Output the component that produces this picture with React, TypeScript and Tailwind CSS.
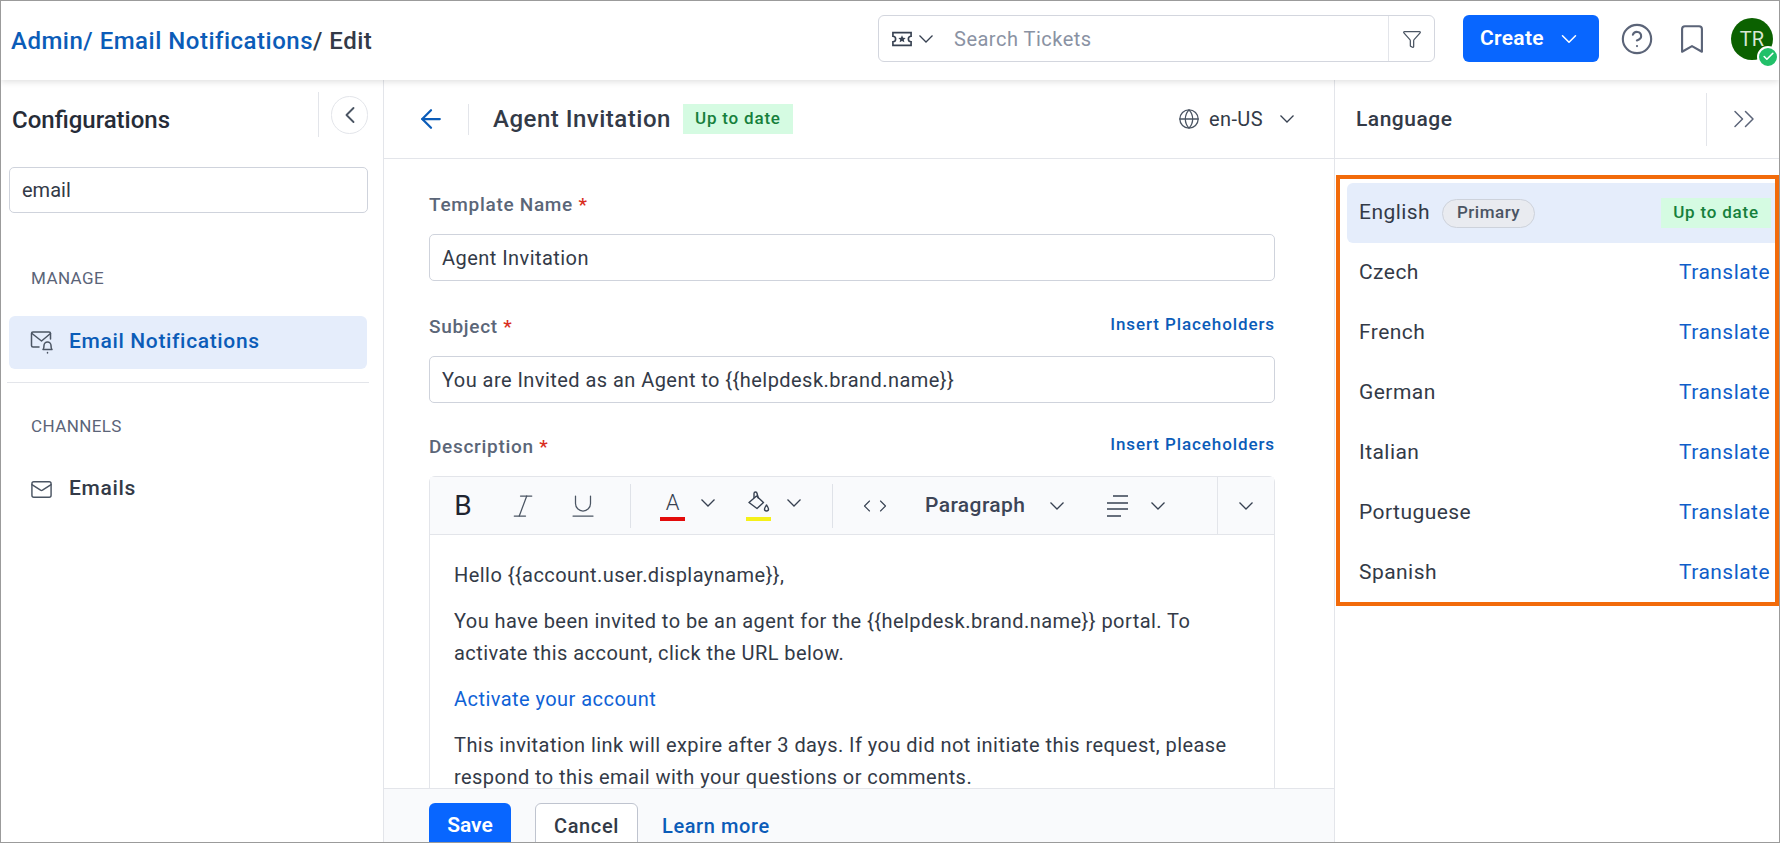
import { ArrowLeft, Bookmark, Check, ChevronDown, ChevronLeft, ChevronRight, ChevronsRight, CircleHelp, Funnel, Globe, Italic, Mail, Underline } from "lucide-react";

const languages = ["Czech", "French", "German", "Italian", "Portuguese", "Spanish"];

function TicketIcon() {
  return (
    <svg width="20" height="16" viewBox="0 0 22 16" fill="none" stroke="#374151" strokeWidth="1.8">
      <path d="M1 1h20v4a3 3 0 0 0 0 6v4H1v-4a3 3 0 0 0 0-6z" />
      <path d="M11 4l1.2 2.5 2.8.3-2 1.9.6 2.8-2.6-1.4-2.6 1.4.6-2.8-2-1.9 2.8-.3z" fill="#374151" stroke="none" />
    </svg>
  );
}

function MailBellIcon() {
  return (
    <svg width="24" height="24" viewBox="0 0 24 24" fill="none" stroke="#4b5563" strokeWidth="1.5" strokeLinecap="round" strokeLinejoin="round">
      <path d="M9 17H3a1.5 1.5 0 0 1-1.5-1.5v-12A1.5 1.5 0 0 1 3 2h16a1.5 1.5 0 0 1 1.500 1.500V9" />
      <path d="M2 3.500l9.500 7.500 9-7.500" />
      <path d="M13 19.500c1-1 1-2 1-4a3.500 3.500 0 0 1 7 0c0 2 0 3 1 4z" />
      <path d="M17.500 22.500v.5" />
    </svg>
  );
}

function BucketIcon() {
  return (
    <svg width="24" height="24" viewBox="0 0 24 24" fill="none" stroke="#374151" strokeWidth="1.4" strokeLinejoin="round">
      <path d="M2 11.500L9.500 5l7 6.500-6.500 6z" />
      <path d="M7 7V2.500a1.500 1.500 0 0 1 3 0l1.500 5" />
      <path d="M19.500 14c-1 1.500-2 2.800-2 4a2 2 0 0 0 4 0c0-1.200-1-2.500-2-4z" />
    </svg>
  );
}

function AlignIcon() {
  return (
    <svg width="22" height="22" viewBox="0 0 22 22" fill="none" stroke="#374151" strokeWidth="1.3">
      <path d="M6 1h15M0 8h21M0 14h21M0 21h14" />
    </svg>
  );
}

function Chev({ className = "" }: { className?: string }) {
  return (
    <svg width="16" height="16" viewBox="0 0 16 16" fill="none" stroke="#374151" strokeWidth="1.3" className={`shrink-0 ${className}`}>
      <path d="M1.500 4.500L8 11l6.500-6.500" />
    </svg>
  );
}

function UpToDate() {
  return (
    <span className="flex h-[30px] w-[110px] items-center justify-center bg-[#d5fbe2] text-[17px] font-medium tracking-[0.8px] text-[#16803c]">
      Up to date
    </span>
  );
}

function Field({ value }: { value: string }) {
  return (
    <div className="mt-[17px] flex h-[47px] items-center rounded-[5px] border border-[#cfd3dc] px-[12px] text-[20px] tracking-[0.45px] text-[#333a47]">
      {value}
    </div>
  );
}

function Label({ text, placeholders }: { text: string; placeholders?: boolean }) {
  return (
    <div className="flex h-[24px] items-center justify-between">
      <span className="pt-[1px] text-[19px] font-medium tracking-[0.7px] text-[#5b6678]">
        {text} <span className="text-[#d92d20]">*</span>
      </span>
      {placeholders && <span className="mb-[5px] text-[17px] font-medium tracking-[0.9px] text-[#0b5cb8]">Insert Placeholders</span>}
    </div>
  );
}

export default function App() {
  return (
    <div className="flex h-[843px] w-[1780px] flex-col overflow-hidden border border-[#9b9b9b] bg-white font-['Roboto',sans-serif]">
      {/* top bar */}
      <header className="relative z-10 flex h-[79px] shrink-0 items-center bg-white pb-[4px] pl-[10px] pr-[6px] shadow-[0_2px_6px_rgba(0,0,0,0.12)]">
        <div className="mt-[4px] text-[24px] font-medium tracking-[0.5px] text-[#333a47]">
          <span className="text-[#0b5cb8]">Admin/ Email Notifications</span>/ Edit
        </div>
        <div className="ml-auto flex h-[47px] w-[557px] items-center rounded-[6px] border border-[#d3d6de]">
          <span className="ml-[13px]"><TicketIcon /></span>
          <Chev className="ml-[6px]" />
          <span className="ml-[20px] text-[20px] tracking-[0.5px] text-[#8a92a3]">Search Tickets</span>
          <div className="ml-auto flex h-full w-[46px] items-center justify-center border-l border-[#e3e5ea]">
            <Funnel className="h-[20px] w-[20px] text-[#4b5563]" strokeWidth={1.5} />
          </div>
        </div>
        <button className="ml-[28px] flex h-[47px] w-[136px] items-center justify-center rounded-[6px] bg-[#0866ff] text-[21px] font-semibold tracking-[0.3px] text-white">
          Create
          <ChevronDown className="ml-[12px] h-[26px] w-[26px]" strokeWidth={1.4} />
        </button>
        <CircleHelp className="ml-[21px] h-[34px] w-[34px] text-[#5b6478]" strokeWidth={1.5} />
        <Bookmark className="ml-[21px] h-[34px] w-[34px] text-[#5b6478]" strokeWidth={1.5} />
        <div className="relative ml-[22px] flex h-[42px] w-[42px] items-center justify-center rounded-full bg-[#0b6100] text-[20px] text-[#d9e8d5]">
          TR
          <span className="absolute -bottom-[8px] -right-[6px] flex h-[22px] w-[22px] items-center justify-center rounded-full border-2 border-white bg-[#22c069]">
            <Check className="h-[13px] w-[13px] text-white" strokeWidth={3} />
          </span>
        </div>
      </header>

      <div className="flex min-h-0 flex-1">
        {/* sidebar */}
        <aside className="w-[383px] shrink-0 border-r border-[#e3e5ea]">
          <div className="mt-[12px] flex h-[45px] items-center">
            <span className="ml-[11px] w-[306px] pt-[11px] text-[24px] font-medium text-[#262c38]">Configurations</span>
            <span className="h-full w-px bg-[#e3e5ea]" />
            <span className="ml-[12px] flex h-[38px] w-[37px] items-center justify-center rounded-full border border-[#e3e5ea]">
              <ChevronLeft className="h-[28px] w-[28px] text-[#4b5563]" strokeWidth={1.6} />
            </span>
          </div>
          <div className="ml-[8px] mt-[30px] flex h-[46px] w-[359px] items-center rounded-[5px] border border-[#cfd3dc] px-[12px] text-[20px] text-[#333a47]">
            email
          </div>
          <div className="ml-[30px] mt-[55px] h-[20px] text-[17px] leading-[20px] tracking-[0.4px] text-[#5b6478]">MANAGE</div>
          <div className="ml-[8px] mt-[28px] flex h-[53px] w-[358px] items-center rounded-[6px] bg-[#e5edfb] pb-[2px] pl-[21px]">
            <MailBellIcon />
            <span className="ml-[15px] text-[21px] font-medium tracking-[0.65px] text-[#0b5cb8]">Email Notifications</span>
          </div>
          <div className="ml-[6px] mt-[13px] h-px w-[362px] bg-[#e3e5ea]" />
          <div className="ml-[30px] mt-[33px] h-[20px] text-[17px] leading-[20px] tracking-[0.4px] text-[#5b6478]">CHANNELS</div>
          <div className="ml-[8px] mt-[27px] flex h-[53px] items-center pb-[1px] pl-[21px]">
            <Mail className="h-[23px] w-[23px] text-[#4b5563]" strokeWidth={1.5} />
            <span className="ml-[16px] text-[21px] font-medium tracking-[0.65px] text-[#333a47]">Emails</span>
          </div>
        </aside>

        {/* template form */}
        <main className="flex w-[950px] shrink-0 flex-col">
          <div className="flex h-[79px] shrink-0 items-center border-b border-[#e3e5ea]">
            <ArrowLeft className="ml-[32px] h-[30px] w-[30px] text-[#0b5cb8]" strokeWidth={1.8} />
            <span className="ml-[22px] h-[31px] w-px bg-[#e3e5ea]" />
            <span className="ml-[24px] text-[24px] font-medium tracking-[0.5px] text-[#333a47]">Agent Invitation</span>
            <span className="ml-[12px]"><UpToDate /></span>
            <Globe className="ml-auto h-[22px] w-[22px] text-[#4b5563]" strokeWidth={1.4} />
            <span className="ml-[9px] text-[20px] tracking-[0.4px] text-[#333a47]">en-US</span>
            <Chev className="ml-[16px] mr-[39px]" />
          </div>

          <div className="min-h-0 flex-1 overflow-hidden pl-[45px] pr-[59px] pt-[34px]">
            <Label text="Template Name" />
            <Field value="Agent Invitation" />
            <div className="mt-[34px]"><Label text="Subject" placeholders /></div>
            <Field value="You are Invited as an Agent to {{helpdesk.brand.name}}" />
            <div className="mt-[32px]"><Label text="Description" placeholders /></div>
            <div className="mt-[17px] rounded-t-[6px] border border-[#e3e5ea]">
              <div className="flex h-[58px] items-center border-b border-[#e3e5ea] bg-[#f9fafc]">
                <span className="w-[66px] text-center text-[28px] text-[#1f2430]">B</span>
                <span className="flex w-[54px] justify-center"><Italic className="h-[30px] w-[30px] text-[#4b5563]" strokeWidth={1} /></span>
                <span className="flex w-[66px] justify-center"><Underline className="h-[30px] w-[30px] text-[#4b5563]" strokeWidth={1} /></span>
                <span className="ml-[14px] h-[44px] w-px bg-[#dfe2e8]" />
                <span className="ml-[29px] flex w-[25px] flex-col items-center text-[22px] font-light leading-[26px] text-[#374151]">
                  A
                  <span className="mt-[1px] h-[4px] w-full bg-[#e30b0b]" />
                </span>
                <Chev className="ml-[15px] -mt-[6px]" />
                <span className="ml-[30px] flex w-[25px] flex-col items-center">
                  <BucketIcon />
                  <span className="mt-[2px] h-[4px] w-full bg-[#f5f019]" />
                </span>
                <Chev className="ml-[15px] -mt-[6px]" />
                <span className="ml-[30px] h-[44px] w-px bg-[#dfe2e8]" />
                <span className="ml-[30px] flex w-[24px] justify-center">
                  <ChevronLeft className="-mr-[2px] h-[20px] w-[20px] shrink-0 text-[#374151]" strokeWidth={1.3} />
                  <ChevronRight className="-ml-[2px] h-[20px] w-[20px] shrink-0 text-[#374151]" strokeWidth={1.3} />
                </span>
                <span className="ml-[38px] w-[100px] text-[21px] font-medium tracking-[0.4px] text-[#3d4557]">Paragraph</span>
                <Chev className="ml-[24px]" />
                <span className="ml-[42px]"><AlignIcon /></span>
                <Chev className="ml-[21px]" />
                <span className="ml-[51px] h-full w-px bg-[#e3e5ea]" />
                <Chev className="ml-[20px]" />
              </div>
              <div className="px-[24px] pt-[24px] text-[20px] leading-[32px] tracking-[0.45px] text-[#333a47]">
                <p>{"Hello {{account.user.displayname}},"}</p>
                <p className="mt-[14px]">{"You have been invited to be an agent for the {{helpdesk.brand.name}} portal. To activate this account, click the URL below."}</p>
                <p className="mt-[14px] text-[#0f62d6]">Activate your account</p>
                <p className="mt-[14px]">This invitation link will expire after 3 days. If you did not initiate this request, please respond to this email with your questions or comments.</p>
              </div>
            </div>
          </div>

          <div className="flex h-[54px] shrink-0 overflow-hidden border-t border-[#e3e5ea] bg-[#f9fafc] pl-[45px] pt-[14px]">
            <button className="h-[47px] w-[82px] rounded-[6px] bg-[#0866ff] pb-[2px] text-[21px] font-semibold text-white">Save</button>
            <button className="ml-[24px] h-[47px] w-[103px] rounded-[6px] border border-[#bfc4cf] bg-white pb-[2px] text-[20px] font-medium tracking-[0.6px] text-[#333a47]">Cancel</button>
            <span className="ml-[24px] mt-[8px] text-[20px] font-medium tracking-[0.6px] text-[#0b5cb8]">Learn more</span>
          </div>
        </main>

        {/* language panel */}
        <section className="min-w-0 flex-1 border-l border-[#e3e5ea]">
          <div className="flex h-[79px] items-center border-b border-[#e3e5ea]">
            <span className="ml-[21px] w-[350px] pt-[1px] text-[21px] font-medium tracking-[0.5px] text-[#333a47]">Language</span>
            <span className="h-[53px] w-px bg-[#e3e5ea]" />
            <ChevronsRight className="ml-[19px] h-[36px] w-[36px] shrink-0 text-[#5b6478]" strokeWidth={1} />
          </div>
          <div className="ml-[1px] mt-[16px] h-[431px] overflow-hidden border-4 border-[#f26b0a] pl-[7px] pt-[4px]">
            <div className="flex h-[60px] items-center rounded-l-[6px] bg-[#e5edfb] pl-[12px] pr-[4px]">
              <span className="text-[21px] tracking-[0.45px] text-[#333a47]">English</span>
              <span className="ml-[12px] flex h-[29px] w-[93px] items-center justify-center rounded-full border border-[#cdd2db] bg-[#e9ebf0] text-[17px] font-medium tracking-[0.5px] text-[#4b5563]">Primary</span>
              <span className="ml-auto"><UpToDate /></span>
            </div>
            {languages.map((lang) => (
              <div key={lang} className="flex h-[60px] items-center justify-between pl-[12px] pr-[5px]">
                <span className="text-[21px] tracking-[0.45px] text-[#333a47]">{lang}</span>
                <span className="text-[21px] tracking-[0.45px] text-[#0f5ec9]">Translate</span>
              </div>
            ))}
          </div>
        </section>
      </div>
    </div>
  );
}
